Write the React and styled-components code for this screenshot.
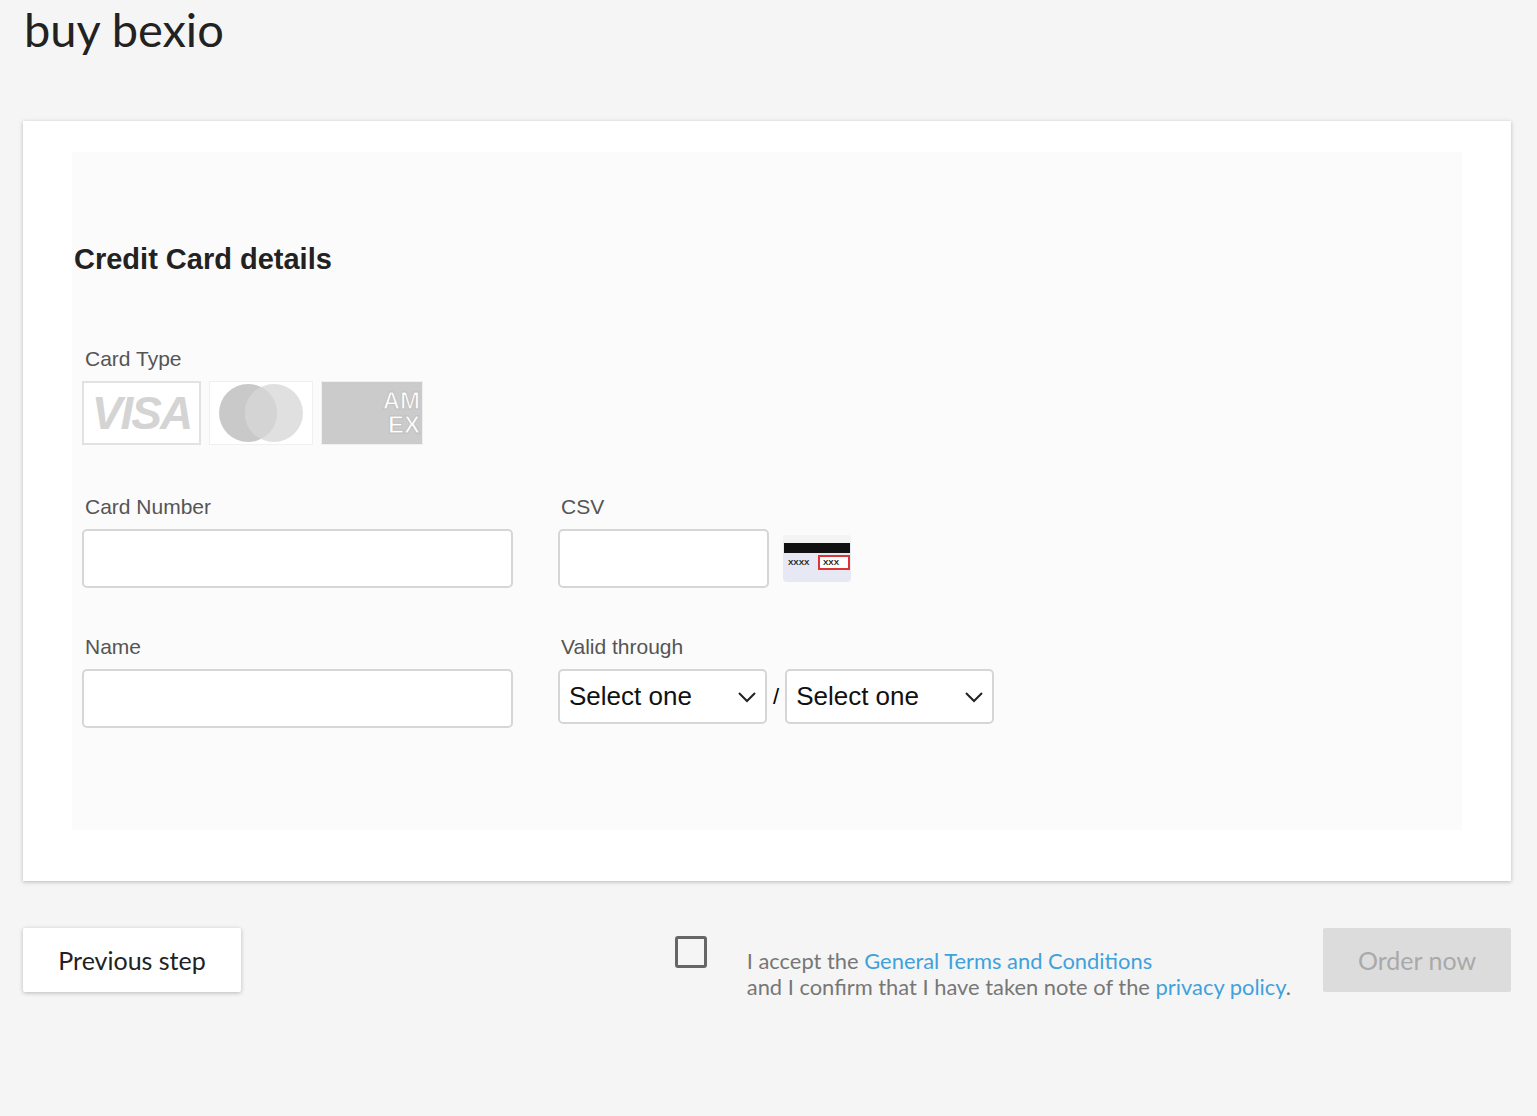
import React from 'react';
import styled, { createGlobalStyle } from 'styled-components';

const Global = createGlobalStyle`
  body { margin: 0; background: #f5f5f5; font-family: Lato, sans-serif; }
`;

const Page = styled.div`
  padding: 0 26px 0 23px;
  height: 1116px;
  box-sizing: border-box;
`;
const Title = styled.h1`
  margin: 0;
  padding: 0 0 0 1px;
  font-weight: 400;
  font-size: 47px;
  line-height: 58px;
  color: #222;
`;
const Card = styled.div`
  margin-top: 63px;
  background: #fff;
  box-shadow: 0 1px 4px rgba(0,0,0,0.25);
  padding: 31px 49px 51px 49px;
`;
const Inner = styled.div`
  background: #fbfbfb;
  height: 678px;
  padding: 88px 0 0 2px;
  box-sizing: border-box;
  font-family: "Liberation Sans", Arial, sans-serif;
`;
const Heading = styled.h2`
  margin: 0 0 68px;
  font-family: "Liberation Sans", Arial, sans-serif;
  font-size: 29px;
  font-weight: 700;
  color: #222;
  line-height: 38px;
`;
const Fields = styled.div`
  padding-left: 8px;
`;
const Label = styled.div`
  font-family: "Liberation Sans", Arial, sans-serif;
  font-size: 21px;
  color: #555;
  margin: 0 0 9px 3px;
  line-height: 26px;
`;
const Logos = styled.div`
  display: flex;
  gap: 8px;
  margin-bottom: 49px;
`;
const Logo = styled.div`
  width: ${p => p.w}px;
  height: 64px;
  box-sizing: border-box;
  border: ${p => p.border ? '2px solid #e2e2e2' : '1px solid #f0f0f0'};
  background: ${p => p.bg || '#fff'};
  display: flex;
  align-items: center;
  justify-content: flex-end;
  overflow: hidden;
`;
const VisaText = styled.span`
  margin: 0 auto;
  font-family: "Liberation Sans", Arial, sans-serif;
  font-style: italic;
  font-weight: 900;
  font-size: 46px;
  color: #d4d4d4;
  letter-spacing: -2px;
`;
const AmexText = styled.span`
  font-family: "Liberation Sans", Arial, sans-serif;
  font-weight: 700;
  font-size: 24px;
  line-height: 24px;
  color: #fff;
  -webkit-text-stroke: 1px #c0c0c0;
  text-align: right;
  padding-right: 2px;
`;
const Row = styled.div`
  display: flex;
  gap: 45px;
  margin-bottom: 46px;
`;
const Col = styled.div`
  display: flex;
  flex-direction: column;
`;
const InputWrap = styled.div`
  display: flex;
  align-items: center;
  gap: ${p => p.gap ?? 14}px;
`;
const Input = styled.input`
  width: ${p => p.w}px;
  height: 59px;
  box-sizing: border-box;
  border: 2px solid #d6d6d6;
  border-radius: 5px;
  background: #fff;
`;
const SelectBox = styled.div`
  width: 209px;
  height: 55px;
  box-sizing: border-box;
  border: 2px solid #d6d6d6;
  border-radius: 5px;
  background: #fff;
  display: flex;
  align-items: center;
  justify-content: space-between;
  padding: 0 8px 0 9px;
  font-size: 26px;
  color: #111;
`;
const Slash = styled.span`
  font-size: 22px;
  margin: 0 6px;
`;
const Footer = styled.div`
  display: flex;
  align-items: center;
  margin-top: 39px;
`;
const Button = styled.div`
  height: 64px;
  width: ${p => p.w}px;
  display: flex;
  align-items: center;
  justify-content: center;
  font-size: 25px;
  background: ${p => p.disabled ? '#dcdcdc' : '#fff'};
  color: ${p => p.disabled ? '#a9a9a9' : '#222'};
  box-shadow: ${p => p.disabled ? 'none' : '0 1px 4px rgba(0,0,0,0.25)'};
  border-radius: 2px;
`;
const Accept = styled.div`
  margin-left: auto;
  display: flex;
  align-items: flex-start;
  margin-right: 32px;
  margin-top: 28px;
`;
const Check = styled.div`
  width: 32px;
  height: 32px;
  box-sizing: border-box;
  border: 3px solid #666;
  border-radius: 3px;
  margin-right: 40px;
  margin-top: -12px;
`;
const AcceptText = styled.div`
  font-size: 21.9px;
  line-height: 26px;
  color: #777;
`;
const Link = styled.span`
  color: #3fa1dc;
`;

function CsvIcon() {
  return (
    <svg width="68" height="47" viewBox="0 0 68 47">
      <rect x="0" y="0" width="68" height="47" rx="4" fill="#e6e9f4" />
      <rect x="0" y="0" width="68" height="8" rx="3" fill="#f4f4f4" />
      <rect x="1" y="8" width="66" height="10" fill="#111" />
      <text x="5" y="30" fontSize="8" fontWeight="700" fontFamily="Liberation Sans" fill="#222">XXXX</text>
      <rect x="36" y="21" width="30" height="13" fill="#fff" stroke="#d33" strokeWidth="2" />
      <text x="40" y="30" fontSize="8" fontWeight="700" fontFamily="Liberation Sans" fill="#222">XXX</text>
    </svg>
  );
}

function Chevron() {
  return (
    <svg width="20" height="12" viewBox="0 0 20 12">
      <path d="M2 2 L10 10 L18 2" fill="none" stroke="#222" strokeWidth="2" />
    </svg>
  );
}

export default function App() {
  return (
    <Page>
      <Global />
      <Title>buy bexio</Title>
      <Card>
        <Inner>
          <Heading>Credit Card details</Heading>
          <Fields>
            <Label>Card Type</Label>
            <Logos>
              <Logo w={119} border><VisaText>VISA</VisaText></Logo>
              <Logo w={104}>
                <svg width="102" height="60" viewBox="0 0 102 60">
                  <circle cx="38" cy="30" r="29" fill="#c9c9c9" />
                  <circle cx="64" cy="30" r="29" fill="#e0e0e0" />
                  <path d="M51 4 A29 29 0 0 1 51 56 A29 29 0 0 1 51 4Z" fill="#d4d4d4" />
                </svg>
              </Logo>
              <Logo w={102} bg="#cbcbcb"><AmexText>AM<br />EX</AmexText></Logo>
            </Logos>
            <Row>
              <Col>
                <Label>Card Number</Label>
                <Input w={431} />
              </Col>
              <Col>
                <Label>CSV</Label>
                <InputWrap>
                  <Input w={211} />
                  <CsvIcon />
                </InputWrap>
              </Col>
            </Row>
            <Row>
              <Col>
                <Label>Name</Label>
                <Input w={431} />
              </Col>
              <Col>
                <Label>Valid through</Label>
                <InputWrap gap={0}>
                  <SelectBox>Select one <Chevron /></SelectBox>
                  <Slash>/</Slash>
                  <SelectBox>Select one <Chevron /></SelectBox>
                </InputWrap>
              </Col>
            </Row>
          </Fields>
        </Inner>
      </Card>
      <Footer>
        <Button w={218}>Previous step</Button>
        <Accept>
          <Check />
          <AcceptText>
            I accept the <Link>General Terms and Conditions</Link><br />
            and I confirm that I have taken note of the <Link>privacy policy</Link>.
          </AcceptText>
        </Accept>
        <Button w={188} disabled>Order now</Button>
      </Footer>
    </Page>
  );
}
